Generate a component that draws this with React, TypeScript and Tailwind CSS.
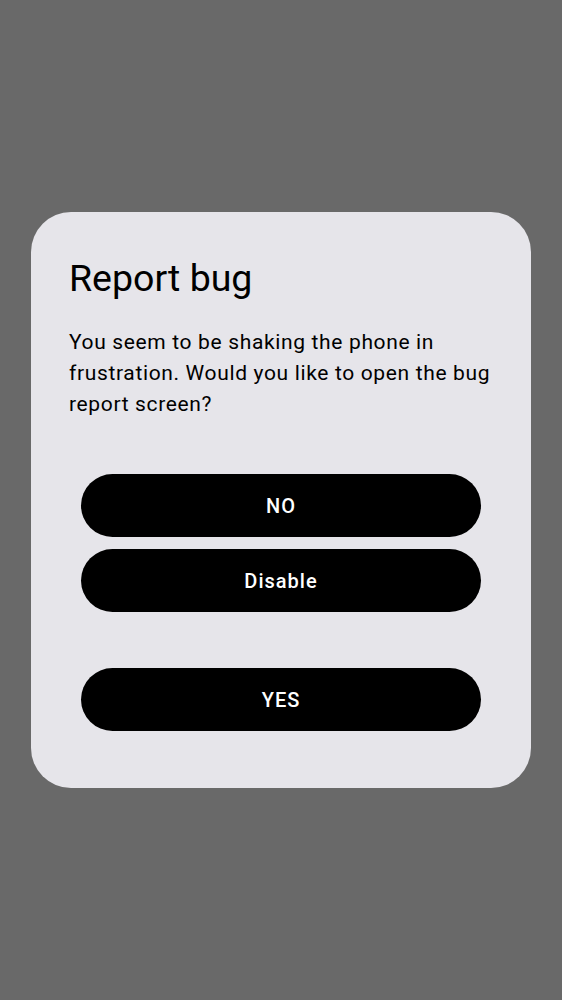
export default function App() {
  return (
    <div className="min-h-screen w-full bg-[#696969] pt-[212px]" style={{ fontFamily: 'Roboto, "Noto Sans", sans-serif' }}>
      <div className="mx-[31px] rounded-[40px] bg-[#e6e5ea] px-[38px] pt-[44px] pb-[57px]">
        <h1 className="text-[37.5px] leading-[44px] text-black">Report bug</h1>
        <p className="mt-[27px] text-[21px] leading-[31px] tracking-[0.65px] text-black">
          You seem to be shaking the phone in frustration. Would you like to open the bug report screen?
        </p>
        <div className="mt-[54px] flex flex-col px-[12px]">
          <button className="h-[63px] w-full rounded-full bg-black text-[20px] font-medium tracking-[1px] text-white">NO</button>
          <button className="mt-[12px] h-[63px] w-full rounded-full bg-black text-[20px] font-medium tracking-[1px] text-white">Disable</button>
          <button className="mt-[56px] h-[63px] w-full rounded-full bg-black text-[20px] font-medium tracking-[1px] text-white">YES</button>
        </div>
      </div>
    </div>
  );
}
